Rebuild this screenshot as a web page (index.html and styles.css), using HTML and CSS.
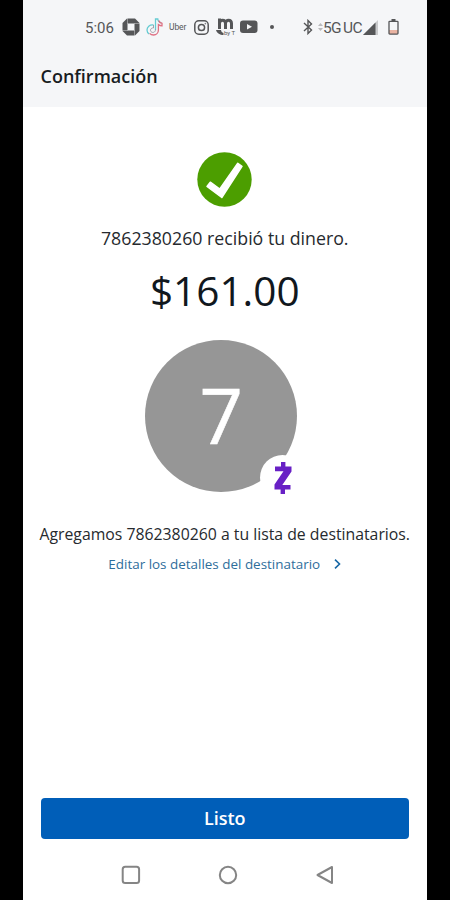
FILE: index.html
```
<!DOCTYPE html>
<html lang="es">
<head>
<meta charset="utf-8">
<title>Confirmación</title>
<link rel="stylesheet" href="styles.css">
</head>
<body>
<div class="phone">
  <header class="header">
    <div class="status">
      <span class="time">5:06</span>
      <svg class="chase" width="18" height="18" viewBox="0 0 18 18"><path fill="#555658" d="M5 .5h8L17.500 5v8L13 17.500H5L.5 13V5z"/><path fill="#f5f6f8" d="M5.500 5.500h7v7h-7z"/><path stroke="#f5f6f8" stroke-width=".4" d="M5.500 0v6M12 5.500h6M12.500 12v6M0 12.500h6"/></svg>
      <svg class="tiktok" width="17" height="18" viewBox="0 0 17 18" fill="none" stroke-width="1.3"><path stroke="#65cbd2" d="M9.500 12V1h2.300c.2 2.500 1.700 3.500 3.700 3.800M7.500 7C3.500 6.500 1 9 1 12c0 2 1 3.300 2.200 4"/><path stroke="#df7083" d="M12.700 2.500c.5 1.700 1.500 2.500 3.300 2.800v2.500c-1.500 0-2.500-.4-3.600-1.200V12c0 3-2.200 5-4.800 5-1.700 0-3-.5-4-1.700"/><path stroke="#8d8d99" stroke-width=".8" d="M9.500 11.500c0 4-5 3.500-5 .8 0-1.700 1.500-2.600 3-2.300V7"/></svg>
      <span class="uber">Uber</span>
      <svg class="insta" width="15" height="15" viewBox="0 0 15 15" fill="none" stroke="#555658" stroke-width="1.500"><rect x=".8" y=".8" width="13.400" height="13.400" rx="4"/><circle cx="7.500" cy="7.500" r="3.100"/><circle cx="11.300" cy="3.700" r=".4" stroke-width=".8"/></svg>
      <span class="metro">
        <svg width="18" height="18" viewBox="0 0 18 18"><path fill="none" stroke="#555658" stroke-width="3" d="M3.500 11V.5M3.500 5.500c0-4.300 6-4.300 6 0V11M9.500 5.500c0-4.300 6-4.300 6 0V11"/><path fill="#555658" d="M0 12h5c.2 1.500 1 2.500 2.500 3v2C4 17 1 15.500 0 12z"/></svg>
        <span class="by">by T</span>
      </span>
      <svg class="youtube" width="18" height="14" viewBox="0 0 18 14"><rect y=".5" width="17.500" height="12.500" rx="3" fill="#555658"/><path fill="#f5f6f8" d="M7 4l5 2.800-5 2.800z"/></svg>
      <span class="dot"></span>
      <svg class="bluetooth" width="12" height="16" viewBox="0 0 12 16" fill="none" stroke="#555658" stroke-width="1.400"><path d="M2 4l7.500 7L6 14.500v-13L9.500 5 2 12"/></svg>
      <svg class="arrows" width="5" height="8" viewBox="0 0 5 8"><path fill="#b9babc" d="M0 3l2.500-3L5 3zM0 5h5L2.500 8z"/></svg>
      <span class="network">5G<span class="uc">UC</span></span>
      <svg class="signal" width="15" height="15" viewBox="0 0 15 15"><path fill="#c9cacc" d="M15 0v15H0z"/><path fill="#555658" d="M12.500 2.500V15H0z"/></svg>
      <svg class="battery" width="11" height="16" viewBox="0 0 11 16"><path fill="#e9b3a2" d="M1 11h9v4H1z"/><path fill="none" stroke="#555658" stroke-width="1.300" d="M1.700 2.300h7.600q.7 0 .7.700v11.300q0 .8-.8.800H1.800q-.8 0-.8-.8V3q0-.7.700-.7z"/><path fill="#555658" d="M3.500 0h4v2.300h-4z"/></svg>
    </div>
    <h1 class="title">Confirmación</h1>
  </header>
  <main class="main">
    <svg class="check" width="55" height="55" viewBox="0 0 55 55"><circle cx="27.500" cy="27.500" r="27.200" fill="#4c9e00"/><path fill="#fff" stroke="#fff" stroke-width="1.500" stroke-linejoin="round" d="M10 34.500L13.300 30.200 22.800 37 40.800 11.300 45 14.300 24.800 45.500z"/></svg>
    <p class="received">7862380260 recibió tu dinero.</p>
    <p class="amount">$161.00</p>
    <div class="avatar">
      <span class="initial">7</span>
      <span class="badge"><svg width="18" height="32" viewBox="0 0 18 32"><path fill="#6820c5" d="M7 0h4.400v4.500H17.500V9.500L8.300 23H16.500v4.500H11V32H6.600v-4.500H.5V22.500L9.500 9.200H1V4.500h6z"/></svg></span>
    </div>
    <p class="added">Agregamos 7862380260 a tu lista de destinatarios.</p>
    <a class="edit"><span>Editar los detalles del destinatario</span><svg width="7" height="10" viewBox="0 0 7 10" fill="none" stroke="#1767a5" stroke-width="1.600"><path d="M1 .7L5.500 5 1 9.300"/></svg></a>
  </main>
  <button class="done">Listo</button>
  <nav class="nav">
    <svg width="20" height="20" viewBox="0 0 20 20"><rect x="1.700" y="1.700" width="16.400" height="16.400" rx="2.500"/></svg>
    <svg width="20" height="20" viewBox="0 0 20 20"><circle cx="10" cy="10" r="8.200"/></svg>
    <svg width="20" height="20" viewBox="0 0 20 20"><path stroke-linejoin="round" d="M17 2v16L2.500 10z"/></svg>
  </nav>
</div>
</body>
</html>
```
FILE: styles.css
```
* { box-sizing: border-box; }
body { margin: 0; background: #000; font-family: "Open Sans", sans-serif; color: #262a2e; }
h1, p { margin: 0; }
svg { display: block; flex: none; }
.phone { width: 404.500px; height: 900px; margin-left: 22.500px; background: #fff; display: flex; flex-direction: column; }
.header { height: 107px; background: #f5f6f8; flex: none; }
.status { height: 54px; padding-left: 62.500px; display: flex; align-items: center; font-family: Roboto, sans-serif; color: #555658; white-space: nowrap; }
.time { width: 37px; font-size: 15px; line-height: 20px; padding-top: 1px; }
.tiktok { margin-left: 6px; }
.uber { width: 19px; margin-left: 6px; font-size: 8.500px; letter-spacing: -.1px; }
.insta { margin-left: 6px; }
.metro { position: relative; margin-left: 7px; }
.by { position: absolute; left: 8px; top: 11px; font-size: 6px; line-height: 7px; }
.youtube { margin-left: 6px; }
.dot { width: 4px; height: 4px; margin-left: 12px; border-radius: 50%; background: #555658; }
.bluetooth { margin-left: 28px; }
.arrows { margin-left: 4px; }
.network { width: 39px; font-size: 15.500px; line-height: 20px; padding-top: 1px; letter-spacing: -.6px; }
.uc { margin-left: 2px; }
.signal { margin-left: 1px; }
.battery { margin-left: 10px; }
.title { padding-left: 18px; font-size: 18px; line-height: 44px; font-weight: 600; color: #181c22; }
.main { flex: 1; display: flex; flex-direction: column; align-items: center; padding-top: 45px; }
.received { margin-top: 18px; font-size: 17.750px; line-height: 26px; white-space: nowrap; }
.amount { margin-top: 10px; font-size: 40.500px; line-height: 60px; color: #11171d; }
.avatar { position: relative; width: 152px; height: 152px; margin: 19px 7px 0 0; border-radius: 50%; background: #969696; display: flex; align-items: center; justify-content: center; }
.initial { font-size: 76px; line-height: 152px; color: #fff; -webkit-text-stroke: .6px #fff; padding-bottom: 3px; }
.badge { position: absolute; left: 115px; top: 115px; width: 45px; height: 45px; border-radius: 50%; background: #fff; display: flex; align-items: center; justify-content: center; }
.added { margin-top: 29.500px; font-size: 15.800px; line-height: 24px; white-space: nowrap; }
.edit { margin-top: 8.500px; display: flex; align-items: center; gap: 14px; font-size: 13.450px; line-height: 20px; color: #2e6e9b; white-space: nowrap; }
.done { height: 41px; margin: 0 18px; border: 0; border-radius: 4px; background: #005eb8; color: #fff; font: 600 18px/41px "Open Sans", sans-serif; padding: 0; flex: none; }
.nav { height: 61px; padding: 26px 92px 0 98px; display: flex; justify-content: space-between; align-items: flex-start; flex: none; }
.nav svg { fill: none; stroke: #858585; stroke-width: 2px; }
```
